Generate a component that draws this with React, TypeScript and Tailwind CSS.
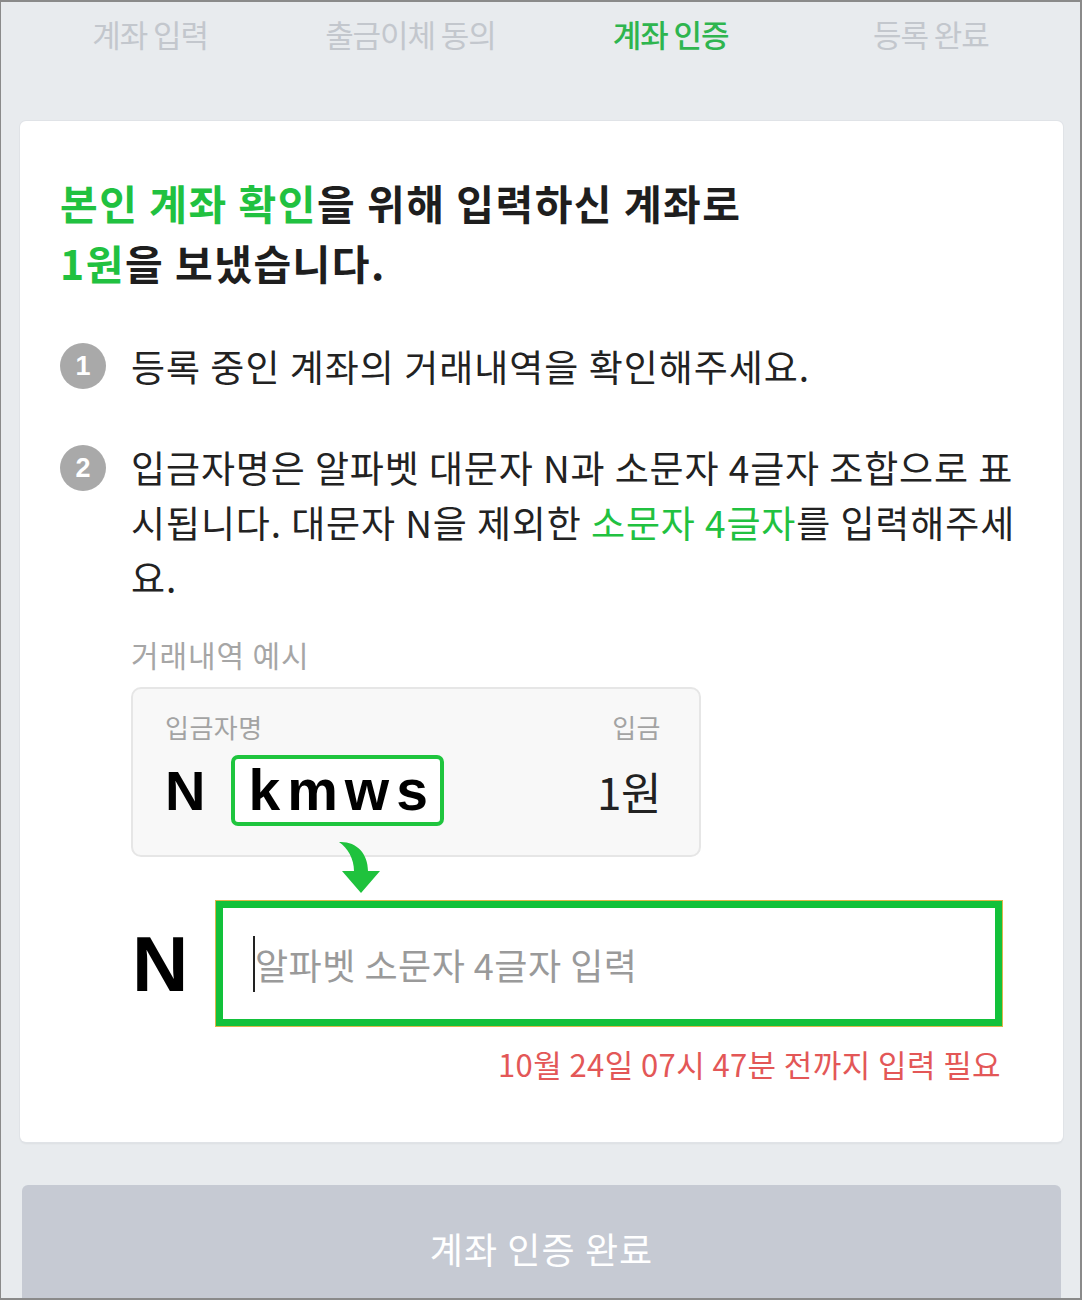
import React from "react";

const KR = { fontFamily: '"Noto Sans CJK KR", "Noto Sans", sans-serif' };
const LAT = { fontFamily: '"Liberation Sans", Arial, sans-serif' };

function Arrow() {
  return (
    <svg width="44" height="54" viewBox="0 0 44 54" className="absolute left-[207px] top-[153px] z-10">
      <path
        d="M1 2 C18 1 30 13 30 31 L42 31 L23 53 L4 31 L16 31 C16 19 10 8 1 2 Z"
        fill="#1fc23d"
      />
    </svg>
  );
}

export default function App() {
  const tabs = ["계좌 입력", "출금이체 동의", "계좌 인증", "등록 완료"];
  return (
    <div
      className="w-[1082px] h-[1300px] overflow-hidden bg-[#e8ebee] border-t-2 border-r-2 border-b-2 border-l border-[#8a8a8a] flex flex-col"
      style={KR}
    >
      {/* Tabs */}
      <div className="grid grid-cols-4 h-[64px] items-center px-[19px] shrink-0">
        {tabs.map((t, i) => (
          <div
            key={t}
            className={
              "text-center text-[31px] leading-[40px] tracking-[-1.1px] " +
              (i === 2 ? "text-[#2fb54f] font-medium" : "text-[#c3c7cd]")
            }
          >
            {t}
          </div>
        ))}
      </div>

      {/* Card */}
      <div className="ml-[19px] mt-[55px] w-[1043px] h-[1021px] shrink-0 bg-white rounded-[6px] shadow-[0_0_0_1px_#e0e3e7,0_2px_2px_rgba(0,0,0,0.05)] pl-[40px] pt-[51px]">
        <h1 className="text-[41px] leading-[60px] font-bold tracking-[1.5px] text-[#1e1e1e] whitespace-nowrap">
          <span className="text-[#21c140]">본인 계좌 확인</span>을 위해 입력하신 계좌로
          <br />
          <span className="text-[#21c140]">1원</span>을 보냈습니다.
        </h1>

        {/* Step 1 */}
        <div className="flex items-start mt-[46px]">
          <div className="w-[46px] h-[46px] mt-[5px] rounded-full bg-[#a9a9a9] flex items-center justify-center text-white text-[27px] font-bold shrink-0" style={LAT}>
            1
          </div>
          <div className="ml-[25px] text-[37px] leading-[56px] tracking-[1px] text-[#222] whitespace-nowrap">
            등록 중인 계좌의 거래내역을 확인해주세요.
          </div>
        </div>

        {/* Step 2 */}
        <div className="flex items-start mt-[46px]">
          <div className="w-[46px] h-[46px] mt-[5px] rounded-full bg-[#a9a9a9] flex items-center justify-center text-white text-[27px] font-bold shrink-0" style={LAT}>
            2
          </div>
          <div className="ml-[25px] text-[37px] leading-[55px] tracking-[0.9px] text-[#222] whitespace-nowrap">
            입금자명은 알파벳 대문자 N과 소문자 4글자 조합으로 표
            <br />
            시됩니다. 대문자 N을 제외한 <span className="text-[#21c140]">소문자 4글자</span>를 입력해주세
            <br />
            요.
          </div>
        </div>

        <div className="ml-[71px] mt-[29px] text-[30px] leading-[40px] tracking-[0.9px] text-[#a6a6a6]">
          거래내역 예시
        </div>

        {/* Example box */}
        <div className="relative ml-[71px] mt-[13px] w-[570px]">
          <div className="h-[170px] rounded-[10px] border-2 border-[#e6e6e6] bg-[#f8f8f8] pl-[32px] pr-[38px] pt-[20px]">
            <div className="flex justify-between text-[26px] leading-[36px] tracking-[0.5px] text-[#a3a3a3]">
              <span>입금자명</span>
              <span>입금</span>
            </div>
            <div className="flex items-center justify-between mt-[10px]">
              <div className="flex items-center">
                <span className="text-[56px] font-bold text-black leading-none" style={LAT}>
                  N
                </span>
                <div className="ml-[26px] w-[213px] h-[71px] border-4 border-[#1fc53e] rounded-[7px] bg-white flex items-center pl-[13px]">
                  <span className="text-[57px] font-bold text-black leading-none tracking-[7px] whitespace-nowrap" style={LAT}>
                    kmws
                  </span>
                </div>
              </div>
              <span className="text-[44px] leading-none text-[#222] tracking-[-0.5px]">1원</span>
            </div>
          </div>
          <Arrow />
        </div>

        {/* Input row */}
        <div className="ml-[71px] mt-[43px] flex items-center w-[872px]">
          <div className="w-[84px] shrink-0">
            <span className="text-[78px] font-bold text-black leading-none ml-[1px]" style={LAT}>
              N
            </span>
          </div>
          <div className="w-[788px] h-[127px] border border-[#dcb54a]">
            <div className="w-full h-full border-[7px] border-[#12c13a] bg-white flex items-center pl-[30px]">
              <div className="w-[2px] h-[56px] bg-[#222]" />
              <span className="text-[36px] leading-[40px] text-[#9a9a9a] tracking-[0.5px] whitespace-nowrap">
                알파벳 소문자 4글자 입력
              </span>
            </div>
          </div>
        </div>

        <div className="ml-[71px] mt-[17px] w-[872px] text-right pr-[2px] text-[31px] leading-[40px] tracking-[0.4px] text-[#e35757] whitespace-nowrap">
          10월 24일 07시 47분 전까지 입력 필요
        </div>
      </div>

      {/* Button */}
      <div className="ml-[21px] mt-[43px] w-[1039px] h-[200px] shrink-0 rounded-t-[6px] bg-[#c6cad3] flex justify-center pt-[40px]">
        <span className="text-[36px] leading-[46px] tracking-[1.1px] text-white">계좌 인증 완료</span>
      </div>
    </div>
  );
}
